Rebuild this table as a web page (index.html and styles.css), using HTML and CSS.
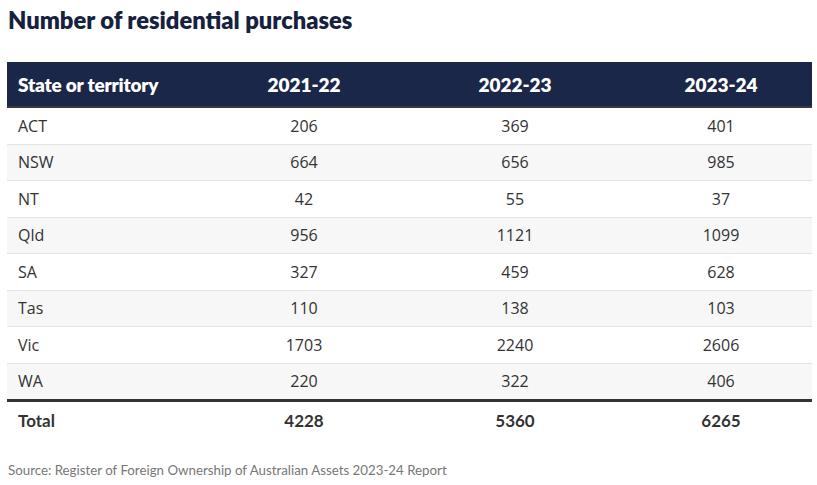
FILE: index.html
```html
<!DOCTYPE html>
<html lang="en">
<head>
<meta charset="utf-8">
<title>Number of residential purchases</title>
<link rel="stylesheet" href="styles.css">
</head>
<body>
<h2 class="title">Number of residential purchases</h2>
<table class="data">
  <colgroup>
    <col class="c1"><col class="c2"><col class="c3"><col class="c4">
  </colgroup>
  <thead>
    <tr><th class="lbl">State or territory</th><th>2021-22</th><th>2022-23</th><th>2023-24</th></tr>
  </thead>
  <tbody>
    <tr><td class="lbl">ACT</td><td>206</td><td>369</td><td>401</td></tr>
    <tr><td class="lbl">NSW</td><td>664</td><td>656</td><td>985</td></tr>
    <tr><td class="lbl">NT</td><td>42</td><td>55</td><td>37</td></tr>
    <tr><td class="lbl">Qld</td><td>956</td><td>1121</td><td>1099</td></tr>
    <tr><td class="lbl">SA</td><td>327</td><td>459</td><td>628</td></tr>
    <tr><td class="lbl">Tas</td><td>110</td><td>138</td><td>103</td></tr>
    <tr><td class="lbl">Vic</td><td>1703</td><td>2240</td><td>2606</td></tr>
    <tr><td class="lbl">WA</td><td>220</td><td>322</td><td>406</td></tr>
  </tbody>
  <tfoot>
    <tr><td class="lbl">Total</td><td>4228</td><td>5360</td><td>6265</td></tr>
  </tfoot>
</table>
<p class="source">Source: Register of Foreign Ownership of Australian Assets 2023-24 Report</p>
</body>
</html>
```
FILE: styles.css
```css
html, body { margin: 0; padding: 0; background: #fff; }
body {
  padding: 0 5px 0 7px;
  font-family: "Open Sans", "Noto Sans", sans-serif;
  color: #333;
}
.title {
  margin: 0;
  padding: 6px 0 0 1px;
  height: 62px;
  box-sizing: border-box;
  font-family: "Lato", "Open Sans", sans-serif;
  font-weight: 800;
  font-size: 23.7px;
  line-height: 28px;
  color: #16213d;
}
.data {
  width: 805px;
  border-collapse: collapse;
  table-layout: fixed;
}
.c1 { width: 201px; }
.c2 { width: 192px; }
.c3 { width: 230px; }
.c4 { width: 182px; }
.data th {
  background: #1b2748;
  color: #fff;
  font-family: "Lato", "Open Sans", sans-serif;
  font-weight: 800;
  font-size: 19px;
  height: 44px;
  padding: 0;
  text-align: center;
  border-bottom: 2px solid #3a3a3a;
}
.data td {
  height: 35.5px;
  padding: 0;
  text-align: center;
  font-size: 16px;
  border-bottom: 1px solid #e3e3e3;
}
.data .lbl { text-align: left; padding-left: 11px; }
.data th.lbl { letter-spacing: -0.2px; }
.data tbody tr:nth-child(even) td { background: #f7f7f7; }
.data tbody tr:last-child td { border-bottom: 3px solid #333; }
.data tfoot td {
  font-weight: 700;
  font-family: "Lato", "Open Sans", sans-serif;
  font-size: 17px;
  height: 36px;
  border-bottom: none;
}
.source {
  margin: 24px 0 0 1px;
  font-family: "Lato", "Open Sans", sans-serif;
  font-size: 13.3px;
  color: #777;
}
```
